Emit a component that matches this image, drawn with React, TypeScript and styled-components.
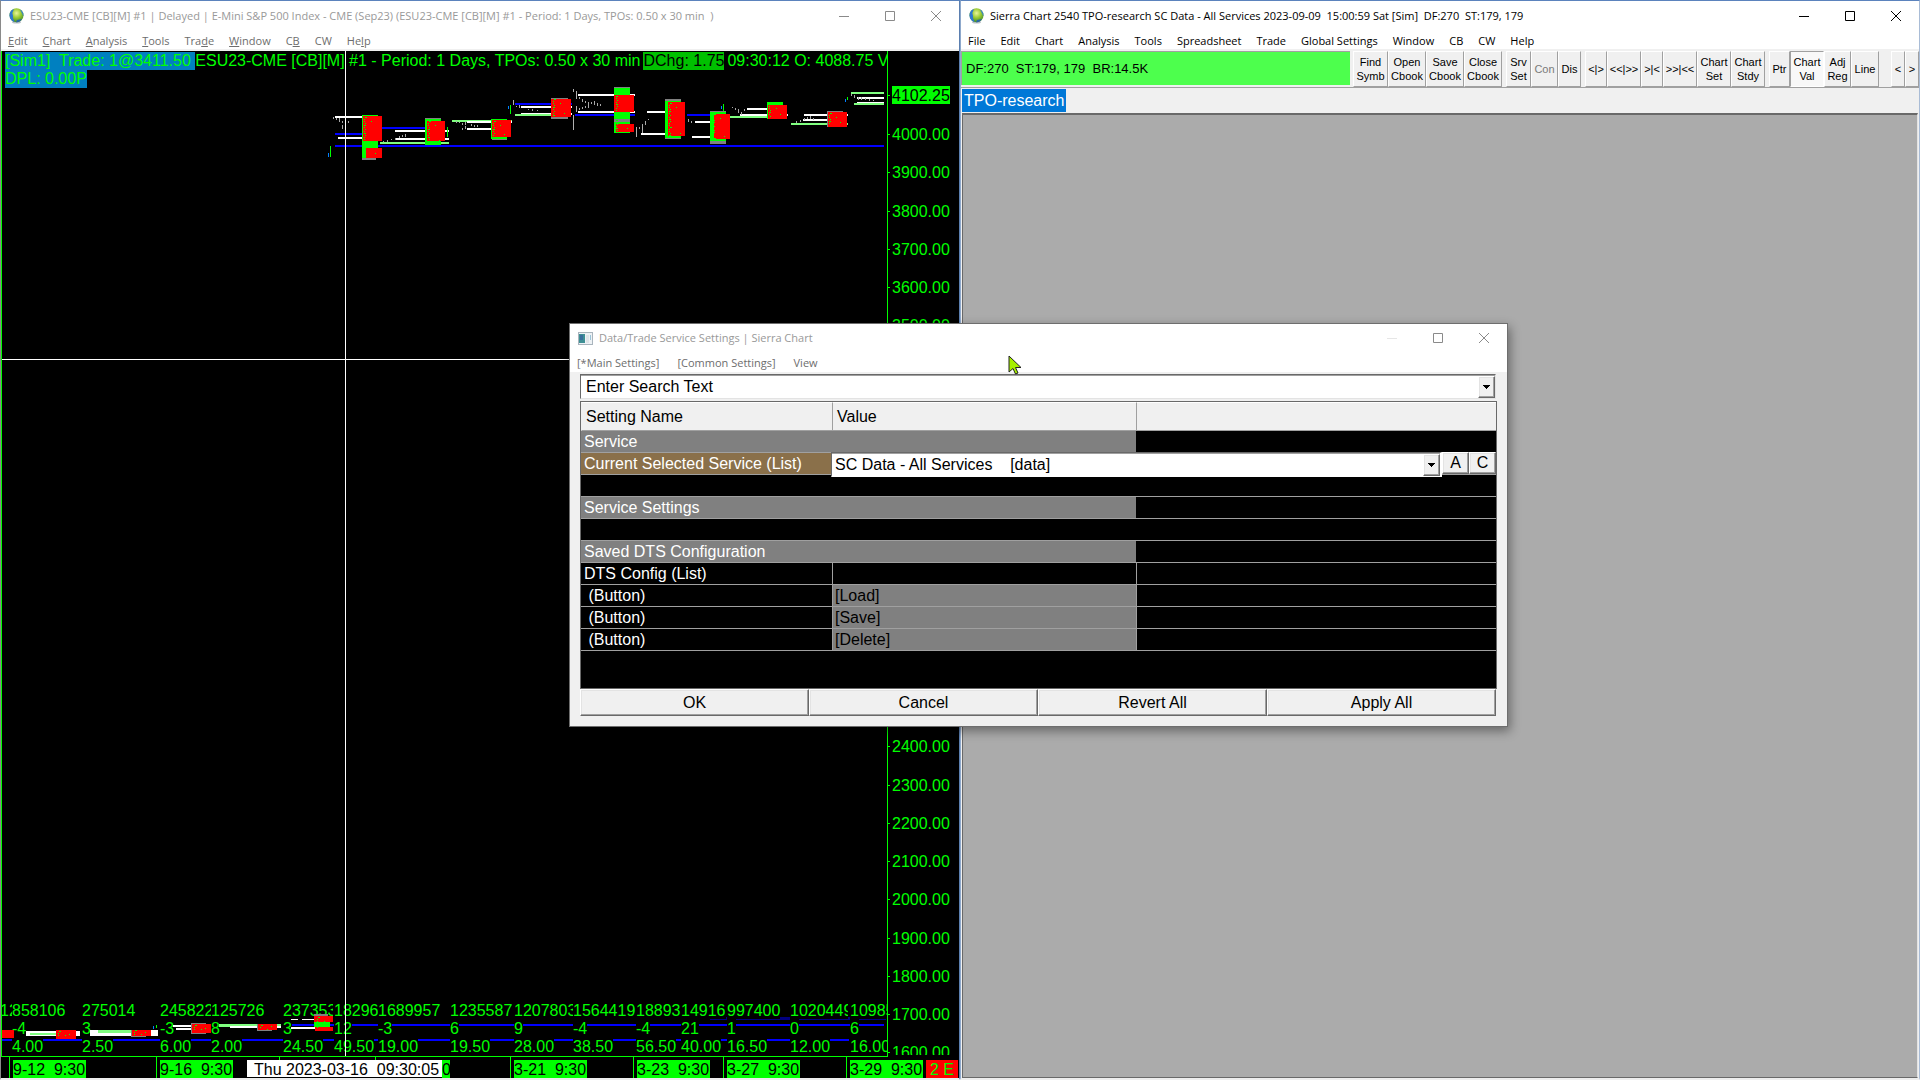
import React from "react";
import styled, { createGlobalStyle, css } from "styled-components";

const UI = '"Open Sans", "Noto Sans", sans-serif';
const ARIAL = '"Liberation Sans", Arial, sans-serif';
const GREEN = "#00ff00";

const Global = createGlobalStyle`
  * { box-sizing: border-box; }
  html, body, #root { height: 100%; margin: 0; }
  body { background: #eeeeee; overflow: hidden; font-family: ${ARIAL}; }
  button, input, select { font: inherit; color: inherit; margin: 0; }
`;

/* ---------- window frame ---------- */

const Desktop = styled.main`
  position: relative;
  display: grid;
  grid-template-columns: 1fr 1fr;
  height: 100vh;
`;

const Pane = styled.section<{ $edge: string; $right: string }>`
  display: flex;
  flex-direction: column;
  min-width: 0;
  min-height: 0;
  border: 1px solid #5b83bd;
  border-left-color: ${(p) => p.$edge};
  border-right-color: ${(p) => p.$right};
  border-bottom: 2px solid #eeeeee;
  background: #f0f0f0;
`;

const TitleBar = styled.header<{ $ink: string; $height?: number }>`
  display: flex;
  align-items: center;
  gap: 6px;
  flex: 0 0 ${(p) => p.$height ?? 30}px;
  padding-left: 8px;
  background: #ffffff;
  color: ${(p) => p.$ink};
  font: 11px/16px ${UI};
  white-space: pre;
`;

const TitleText = styled.h1`
  flex: 1;
  min-width: 0;
  margin: 0;
  overflow: hidden;
  font: inherit;
`;

const Controls = styled.div`
  display: flex;
  align-self: stretch;
`;

const ControlButton = styled.button`
  display: grid;
  place-items: center;
  width: 46px;
  padding: 0;
  border: 0;
  background: none;
`;

const Menu = styled.nav<{ $ink: string; $gap?: number }>`
  display: flex;
  align-items: center;
  gap: ${(p) => p.$gap ?? 15}px;
  flex: 0 0 18px;
  padding: 2px 7px 0;
  background: #ffffff;
  color: ${(p) => p.$ink};
  font: 11px/16px ${UI};
`;

const MenuItem = styled.button`
  padding: 0;
  border: 0;
  background: none;
  white-space: pre;
`;

const MenuEdge = styled.div`
  flex: 0 0 2px;
  background: #f0f0f0;
`;

function WindowControls({ ink, faintMin }: { ink: string; faintMin?: boolean }) {
  return (
    <Controls>
      <ControlButton aria-label="Minimize">
        <svg width="10" height="10" stroke={faintMin ? "#e6e6e6" : ink} fill="none"><path d="M0 5.5H10" /></svg>
      </ControlButton>
      <ControlButton aria-label="Maximize">
        <svg width="10" height="10" stroke={ink} fill="none"><path d="M.5 .5H9.5V9.5H.5Z" /></svg>
      </ControlButton>
      <ControlButton aria-label="Close">
        <svg width="10" height="10" stroke={ink} fill="none"><path d="M0 0L10 10M10 0L0 10" /></svg>
      </ControlButton>
    </Controls>
  );
}

function GlobeIcon({ id }: { id: string }) {
  return (
    <svg width="15" height="16" viewBox="0 0 15 16" aria-hidden="true">
      <defs>
        <radialGradient id={id} cx="0.5" cy="0.35" r="0.65">
          <stop offset="0" stopColor="#e9f59a" />
          <stop offset="0.5" stopColor="#9ccb34" />
          <stop offset="1" stopColor="#3d8a2c" />
        </radialGradient>
      </defs>
      <ellipse cx="7.5" cy="14" rx="4.5" ry="1.6" fill="#b9bfc6" />
      <circle cx="7.5" cy="7.3" r="7" fill={`url(#${id})`} />
      <path d="M4.5 1C1.500 2.300 .5 5 .5 7.500C.6 10.500 2.500 13 5.500 14C5 12 3.500 10.500 4 8.500C4.300 7 3 6 3.500 4.500C3.700 3.300 5 2.500 4.500 1Z" fill="#2f78d2" />
      <path d="M11 1.300C13.500 2.800 14.700 5 14.500 8C13.500 7.500 13.500 5.500 12.500 4.500C11.800 3.500 11.500 2.500 11 1.300Z" fill="#3b86c8" />
      <path d="M8 12C10 12 11.500 11 13 11C11.500 13.500 9.500 14.300 7 14.300Z" fill="#2a66a8" />
    </svg>
  );
}

/* ---------- chart window ---------- */

const ChartArea = styled.div`
  position: relative;
  flex: 1;
  min-height: 0;
  overflow: hidden;
  background: #000000;
`;

const ChartSvg = styled.svg`
  display: block;
  width: 100%;
  height: 100%;
  font: 16px ${ARIAL};
`;

const Legend = styled.div`
  position: absolute;
  top: 1px;
  left: 4px;
  right: 71px;
  overflow: hidden;
  color: ${GREEN};
  font: 16px/18px ${ARIAL};
  white-space: pre;
`;

const LegendLine = styled.div`
  display: flex;
`;

const LegendTag = styled.span<{ $bg?: string; $ink?: string; $after?: number }>`
  flex: none;
  background: ${(p) => p.$bg ?? "transparent"};
  color: ${(p) => p.$ink ?? GREEN};
  margin-right: ${(p) => p.$after ?? 0}px;
`;

const COLORS: Record<string, string> = {
  w: "#ffffff",
  b: "#0000ff",
  l: "#80ff80",
  g: GREEN,
  r: "#ff0000",
  y: "#808080",
  d: "#0080ff",
  s: "#b0b0b0",
  n: "#000080",
};

type Box = [string, number, number, number, number];

/* colour key, x1, y1, x2, y2 */
const LINES: Box[] = [
  ["b", 335, 145, 884, 147], ["w", 335, 116, 362, 118], ["b", 335, 133, 362, 135], ["w", 338, 137, 362, 139],
  ["g", 330, 146, 331, 157], ["d", 328, 153, 329, 157],
  ["b", 382, 127, 425, 129], ["w", 395, 130, 449, 132], ["w", 395, 138, 449, 140], ["l", 380, 142, 449, 144],
  ["l", 452, 120, 512, 122], ["w", 467, 121, 512, 123], ["w", 467, 128, 491, 130],
  ["b", 515, 103, 572, 105], ["w", 521, 106, 572, 108], ["w", 521, 113, 572, 115], ["l", 515, 114, 551, 116],
  ["g", 510, 105, 511, 114], ["d", 508, 106, 509, 109], ["s", 513, 100, 514, 105],
  ["s", 573, 89, 574, 92], ["s", 576, 91, 577, 99], ["s", 576, 106, 577, 112], ["s", 573, 115, 574, 130],
  ["w", 578, 94, 635, 96], ["w", 578, 111, 635, 113], ["b", 575, 114, 635, 116],
  ["w", 647, 111, 665, 113], ["w", 641, 133, 665, 135], ["s", 636, 127, 637, 137], ["s", 642, 125, 643, 133],
  ["b", 687, 114, 710, 116], ["w", 695, 121, 710, 123], ["w", 692, 136, 710, 138],
  ["g", 723, 104, 724, 112], ["d", 721, 106, 722, 109],
  ["w", 747, 108, 787, 110], ["w", 740, 114, 788, 116], ["l", 730, 116, 767, 118],
  ["w", 804, 114, 848, 116], ["w", 803, 119, 827, 121], ["l", 791, 123, 848, 125],
  ["l", 851, 92, 884, 94], ["w", 857, 97, 884, 99], ["w", 857, 102, 884, 104], ["l", 854, 103, 884, 105],
  ["g", 847, 97, 848, 100], ["d", 845, 99, 846, 102],
  ["w", 26, 1031, 80, 1036], ["l", 30, 1033, 60, 1035], ["w", 90, 1030, 158, 1036], ["l", 98, 1030, 131, 1033],
  ["d", 153, 1026, 154, 1029], ["g", 156, 1025, 157, 1028],
  ["w", 173, 1025, 191, 1027], ["w", 176, 1028, 191, 1030],
  ["l", 219, 1024, 281, 1027], ["w", 230, 1026, 281, 1028],
  ["w", 291, 1019, 298, 1020], ["w", 302, 1019, 333, 1020], ["w", 291, 1027, 333, 1029],
];

const BLOCKS: Box[] = [
  ["g", 362, 115, 378, 158], ["r", 363, 116, 382, 141], ["r", 366, 148, 382, 158], ["y", 362, 158, 376, 160],
  ["y", 425, 118, 441, 120], ["g", 425, 119, 441, 145], ["r", 427, 121, 445, 141], ["g", 447, 127, 448, 137],
  ["y", 492, 138, 507, 140], ["g", 491, 119, 507, 139], ["r", 492, 120, 511, 137],
  ["y", 551, 98, 568, 119], ["r", 551, 99, 571, 117],
  ["y", 614, 87, 630, 133], ["g", 614, 88, 630, 119], ["g", 614, 122, 630, 133], ["r", 614, 95, 634, 112], ["r", 616, 124, 634, 132],
  ["y", 665, 99, 681, 139], ["g", 665, 101, 681, 138], ["r", 668, 102, 685, 136],
  ["y", 710, 111, 726, 144], ["g", 710, 112, 726, 141], ["r", 714, 114, 730, 139],
  ["g", 767, 102, 783, 119], ["r", 768, 105, 787, 119],
  ["y", 827, 111, 843, 127], ["r", 828, 112, 847, 127],
  ["r", 2, 1030, 14, 1038], ["r", 56, 1030, 76, 1039],
  ["y", 131, 1030, 146, 1037], ["r", 132, 1030, 151, 1036],
  ["y", 191, 1023, 206, 1034], ["r", 192, 1024, 211, 1033],
  ["y", 257, 1024, 272, 1031], ["r", 258, 1024, 277, 1030],
  ["y", 314, 1014, 328, 1016], ["r", 314, 1016, 333, 1022], ["g", 314, 1022, 330, 1027], ["r", 315, 1027, 333, 1031],
];

/* green letter prints along the left edge of each profile: x, top, bottom */
const SPECKS: [number, number, number][] = [
  [364, 117, 157], [428, 121, 144], [493, 121, 138], [553, 99, 117], [616, 88, 132], [669, 103, 137],
  [713, 114, 140], [769, 104, 118], [829, 113, 126], [58, 1031, 1038], [134, 1030, 1036], [194, 1025, 1032],
  [260, 1025, 1030], [317, 1017, 1030],
];

/* short grey volume prints: x, y, height */
const PRINTS: [number, number, number][] = [
  [333, 117, 2], [336, 118, 2], [339, 118, 4], [342, 121, 2], [342, 125, 4], [348, 121, 2],
  [383, 141, 1], [387, 140, 2], [391, 139, 1], [395, 138, 2], [399, 136, 2], [402, 135, 2], [405, 134, 3],
  [456, 121, 2], [459, 122, 1], [462, 123, 2], [462, 128, 2], [465, 126, 3], [465, 122, 3], [471, 124, 2], [474, 125, 2], [477, 125, 2],
  [516, 106, 1], [519, 105, 3], [528, 109, 1], [532, 109, 2], [537, 110, 1],
  [579, 97, 2], [582, 99, 3], [585, 101, 2], [588, 102, 3], [591, 102, 2], [594, 101, 4], [597, 103, 3], [600, 104, 2],
  [579, 108, 2], [582, 107, 2], [585, 106, 2], [588, 105, 3],
  [639, 127, 2], [642, 124, 3], [645, 121, 4], [648, 119, 1], [688, 119, 3], [691, 121, 2],
  [732, 107, 1], [735, 108, 2], [738, 109, 4], [741, 112, 3], [744, 109, 2],
  [796, 121, 2], [800, 120, 2], [804, 118, 2], [807, 117, 2], [810, 116, 3], [813, 118, 2],
  [851, 94, 2], [854, 95, 3], [858, 97, 3], [861, 97, 3], [865, 98, 2], [869, 99, 2], [873, 100, 1],
];

/* x, cell width, volume, delta, range */
const STATS: [number, number, string, string, string][] = [
  [12, 70, "858106", "-4", "4.00"],
  [82, 78, "275014", "3", "2.50"],
  [160, 51, "245822", "-3", "6.00"],
  [211, 72, "125726", "8", "2.00"],
  [283, 50, "237353", "3", "24.50"],
  [334, 44, "18296", "12", "49.50"],
  [378, 72, "1689957", "-3", "19.00"],
  [450, 64, "1235587", "6", "19.50"],
  [514, 59, "1207803", "9", "28.00"],
  [573, 63, "1564419", "-4", "38.50"],
  [636, 45, "18893", "-4", "56.50"],
  [681, 46, "14916", "21", "40.00"],
  [727, 63, "997400", "1", "16.50"],
  [790, 58, "1020449", "0", "12.00"],
  [850, 37, "10985", "6", "16.00"],
];

const DATES: [number, string][] = [
  [13, "9-12  9:30"], [160, "9-16  9:30"], [514, "3-21  9:30"],
  [637, "3-23  9:30"], [727, "3-27  9:30"], [850, "3-29  9:30"],
];

const PRICES = Array.from({ length: 25 }, (_, i) => 4000 - i * 100);

const textWidth = (t: string) =>
  [...t].reduce((w, c) => w + (c === "." ? 4.45 : c === "-" ? 5.33 : 8.9), 0);

const Rect = ({ b }: { b: Box }) => (
  <rect x={b[1]} y={b[2]} width={b[3] - b[1]} height={b[4] - b[2]} fill={COLORS[b[0]]} />
);

function StatCell({ x, y, w, text }: { x: number; y: number; w: number; text: string }) {
  return (
    <svg x={x} y={y} width={w} height={18} overflow="hidden">
      <rect width={textWidth(text)} height="18" fill="#000" />
      <text x="0" y="15" fill={GREEN}>{text}</text>
    </svg>
  );
}

function Chart() {
  return (
    <ChartSvg viewBox="1 51 958 1027" preserveAspectRatio="xMinYMin meet" shapeRendering="crispEdges" aria-label="TPO profile chart">
      <rect x="2" y="1039" width="847" height="2" fill="#0000ff" />
      <rect x="291" y="1024" width="593" height="2" fill="#0000ff" />
      <rect x="710" y="1017" width="176" height="3" fill="#000080" />
      <StatCell x={0} y={1001} w={12} text="12" />
      {STATS.map(([x, w, vol, delta, range]) => (
        <g key={x}>
          <StatCell x={x} y={1001} w={w} text={vol} />
          <StatCell x={x} y={1019} w={w} text={delta} />
          <StatCell x={x} y={1037} w={w} text={range} />
        </g>
      ))}
      {LINES.map((b, i) => <Rect key={i} b={b} />)}
      {BLOCKS.map((b, i) => <Rect key={i} b={b} />)}
      {SPECKS.map(([x, top, bottom]) => (
        <g key={x} fill={GREEN}>
          {Array.from({ length: Math.floor((bottom - top) / 2) }, (_, i) => (
            <rect key={i} x={x + ((i * 7) % 3 === 0 ? 1 : 0)} y={top + i * 2} width={(i * 5) % 4 === 0 ? 2 : 1} height="1" />
          ))}
          <rect x={x + 7} y={top + 4} width="1" height="1" />
          <rect x={x + 11} y={bottom - 4} width="1" height="1" />
        </g>
      ))}
      {PRINTS.map(([x, y, h], i) => <rect key={i} x={x} y={y} width="1" height={h} fill="#a8a8a8" />)}

      <rect x="2" y="359" width="885" height="1" fill="#fff" />
      <rect x="345" y="51" width="1" height="1005" fill="#fff" />

      <rect x="1" y="51" width="1" height="1006" fill={GREEN} />
      <rect x="887" y="51" width="1" height="1006" fill={GREEN} />
      <rect x="1" y="1056" width="887" height="1" fill={GREEN} />

      <svg x="888" y="51" width="70" height="1004" viewBox="888 51 70 1004" overflow="hidden">
        {PRICES.map((p, i) => {
          const y = Math.round(134 + i * 38.27);
          return (
            <g key={p} fill={GREEN}>
              <rect x="888" y={y} width="2" height="1" />
              <text x="892" y={y + 6}>{p}.00</text>
            </g>
          );
        })}
        <rect x="888" y="95" width="2" height="1" fill={GREEN} />
        <rect x="892" y="86" width="58" height="18" fill={GREEN} />
        <text x="892" y="101" fill="#000">4102.25</text>
      </svg>

      {[9, 156, 510, 633, 723, 846].map((x) => <rect key={x} x={x} y="1056" width="1" height="22" fill={GREEN} />)}
      {[279, 375].map((x) => <rect key={x} x={x} y="1056" width="1" height="4" fill={GREEN} />)}
      {DATES.map(([x, label]) => (
        <g key={x}>
          <rect x={x} y="1060" width="73" height="18" fill={GREEN} />
          <text x={x} y="1075" style={{ whiteSpace: "pre" }}>{label}</text>
        </g>
      ))}
      <rect x="442" y="1060" width="8" height="18" fill={GREEN} />
      <text x="442" y="1075">0</text>
      <rect x="247" y="1060" width="195" height="17" fill="#fff" />
      <text x="254" y="1075" style={{ whiteSpace: "pre" }}>Thu 2023-03-16  09:30:05</text>
      <rect x="926" y="1060" width="32" height="18" fill="#ff0000" />
      <text x="930" y="1075" fill={GREEN}>2 E</text>
    </ChartSvg>
  );
}

/* label pieces: text before the access key, the key, text after it */
const CHART_MENU: [string, string, string][] = [
  ["", "E", "dit"], ["", "C", "hart"], ["", "A", "nalysis"], ["", "T", "ools"], ["Tra", "d", "e"],
  ["", "W", "indow"], ["C", "B", ""], ["CW", "", ""], ["He", "l", "p"],
];

/* ---------- main window ---------- */

const Toolbar = styled.div`
  display: flex;
  flex: 0 0 36px;
  font: 11px/14px ${ARIAL};
  color: #000000;
`;

const Status = styled.output`
  flex: 1;
  display: flex;
  align-items: center;
  min-width: 0;
  margin: 0 3px 2px 0;
  padding-left: 4px;
  border-top: 1px solid #a0a0a0;
  border-left: 1px solid #a0a0a0;
  background: #4dff4d;
  font-size: 13px;
  white-space: pre;
`;

const ToolButton = styled.button<{ $w: number; $before?: number; $pressed?: boolean; $dim?: boolean }>`
  flex: 0 0 ${(p) => p.$w}px;
  margin-left: ${(p) => p.$before ?? 0}px;
  padding: 0;
  border: 1px solid;
  border-color: #ffffff #a0a0a0 #a0a0a0 #ffffff;
  background: #f0f0f0;
  text-align: center;
  white-space: pre;
  ${(p) => p.$dim && css`color: #7a7a7a;`}
  ${(p) => p.$pressed && css`
    border-color: #a0a0a0 #ffffff #ffffff #a0a0a0;
    background: #f8f8f8;
  `}
`;

const TOOLS: { t: string; w: number; gap?: number; pressed?: boolean; dim?: boolean }[] = [
  { t: "Find\nSymb", w: 35 }, { t: "Open\nCbook", w: 38 }, { t: "Save\nCbook", w: 38 }, { t: "Close\nCbook", w: 38 },
  { t: "Srv\nSet", w: 25, gap: 4 }, { t: "Con", w: 27, dim: true }, { t: "Dis", w: 23 },
  { t: "<|>", w: 22, gap: 4 }, { t: "<<|>>", w: 34 }, { t: ">|<", w: 22 }, { t: ">>|<<", w: 34 },
  { t: "Chart\nSet", w: 34 }, { t: "Chart\nStdy", w: 34 },
  { t: "Ptr", w: 21, gap: 4 }, { t: "Chart\nVal", w: 34, pressed: true }, { t: "Adj\nReg", w: 27 }, { t: "Line", w: 28 },
  { t: "<", w: 14, gap: 12 }, { t: ">", w: 14 },
];

const MAIN_MENU = ["File", "Edit", "Chart", "Analysis", "Tools", "Spreadsheet", "Trade", "Global Settings", "Window", "CB", "CW", "Help"];

const TabStrip = styled.div`
  display: flex;
  flex: 0 0 26px;
  padding: 1px 0 1px 1px;
  border-top: 1px solid #a0a0a0;
`;

const Tab = styled.button`
  padding: 0 2px;
  border: 0;
  background: #0078d7;
  color: #ffffff;
  font: 16px/22px ${ARIAL};
`;

const Workspace = styled.div`
  flex: 1;
  margin: 0 1px;
  border: 1px solid #696969;
  border-top-width: 2px;
  border-right-color: #e3e3e3;
  background: #ababab;
`;

/* ---------- settings dialog ---------- */

const Dialog = styled.section`
  position: absolute;
  left: 569px;
  top: 323px;
  width: 939px;
  display: flex;
  flex-direction: column;
  border: 1px solid #6e6e6e;
  background: #f0f0f0;
  box-shadow: 2px 4px 10px rgba(0, 0, 0, 0.4);
  color: #000000;
  font: 16px/18px ${ARIAL};
`;

const DialogBody = styled.div`
  display: flex;
  flex-direction: column;
  gap: 2px;
  padding: 2px 10px 10px;
`;

const Combo = styled.div`
  display: flex;
  height: 25px;
  border: 1px solid;
  border-color: #696969 #e3e3e3 #e3e3e3 #696969;
  box-shadow: inset 0 1px #a0a0a0;
  background: #ffffff;
`;

const SearchBox = styled(Combo)`
  margin-right: 1px;
`;

const raised = css`
  border: 1px solid;
  border-color: #ffffff #696969 #696969 #ffffff;
  background: #f0f0f0;
  box-shadow: inset -1px -1px #a0a0a0, inset 1px 1px #e3e3e3;
`;

const SearchInput = styled.input`
  flex: 1;
  min-width: 0;
  padding: 0 5px;
  border: 0;
  background: transparent;
  outline: 0;
  &::placeholder { color: #000000; opacity: 1; }
`;

const DropButton = styled.button`
  ${raised}
  display: grid;
  place-items: center;
  width: 17px;
  margin: 1px 0 0;
  padding: 0;
`;

const ServiceSelect = styled.select`
  flex: 1;
  min-width: 0;
  padding: 0 3px;
  border: 0;
  outline: 0;
  appearance: none;
  background: transparent;
`;

const DropMark = styled.span`
  ${raised}
  display: grid;
  place-items: center;
  width: 17px;
  margin-top: 1px;
  pointer-events: none;
`;

const Arrow = () => <svg width="7" height="4" shapeRendering="crispEdges"><path d="M0 0H7V1H6V2H5V3H4V4H3V3H2V2H1V1H0Z" /></svg>;

const TableFrame = styled.div`
  min-height: 288px;
  border: 1px solid #696969;
  background: #000000;
`;

const Table = styled.table`
  width: 100%;
  border-collapse: separate;
  border-spacing: 0;
  table-layout: fixed;
`;

const Head = styled.th`
  height: 29px;
  padding: 0 0 0 4px;
  border-top: 1px solid #ffffff;
  border-left: 1px solid #a0a0a0;
  border-bottom: 1px solid #a0a0a0;
  background: #f0f0f0;
  text-align: left;
  font-weight: 400;
  &:first-child { border-left-color: #f0f0f0; }
`;

const Cell = styled.td<{ $bg?: string; $ink?: string; $rule?: boolean }>`
  position: relative;
  height: 22px;
  padding: 0 0 0 ${(p) => (p.$rule ? 2 : 3)}px;
  border-bottom: 1px solid #a0a0a0;
  border-left: ${(p) => (p.$rule ? "1px solid #a0a0a0" : "0")};
  background: ${(p) => p.$bg ?? "#000000"};
  color: ${(p) => p.$ink ?? "#ffffff"};
  white-space: pre;
`;

const RowLabel = styled.label`
  display: block;
  text-align: left;
  font-weight: 400;
`;

const LinkCell = styled.button`
  padding: 0;
  border: 0;
  background: none;
`;

/* the in-place editor floats over its row and the one below it */
const Editor = styled.div`
  position: absolute;
  z-index: 1;
  left: -1px;
  right: 0;
  top: -1px;
  display: flex;
  align-items: flex-start;
  color: #000000;
`;

const EditorCombo = styled(Combo)`
  flex: 1;
  border-bottom-color: #ffffff;
  border-right-width: 2px;
  border-right-color: #ffffff;
`;

const EditorButton = styled.button`
  ${raised}
  width: 27px;
  height: 22px;
  padding: 0;
  line-height: 18px;
`;

const Footer = styled.div`
  display: grid;
  grid-template-columns: repeat(4, 1fr);
  margin: -2px 1px 0 0;
`;

const FooterButton = styled.button`
  ${raised}
  height: 27px;
  padding: 0;
`;

const Cursor = styled.svg`
  position: absolute;
  left: 1008px;
  top: 355px;
`;

const GRAY = "#808080";

function SettingsDialog() {
  return (
    <Dialog role="dialog" aria-label="Data/Trade Service Settings">
      <TitleBar $ink="#999999" $height={28}>
        <svg width="15" height="13" shapeRendering="crispEdges" aria-hidden="true">
          <rect width="15" height="13" fill="#a9b4bd" />
          <rect x="1" y="1" width="13" height="11" fill="#eef2f5" />
          <rect x="1" y="2" width="6" height="9" fill="#3f8f94" />
          <rect x="2" y="3" width="3" height="5" fill="#3a6f9c" />
          <rect x="8" y="3" width="3" height="8" fill="#dfe4e8" />
          <rect x="12" y="3" width="1" height="5" fill="#9cc4d8" />
        </svg>
        <TitleText as="h2">Data/Trade Service Settings | Sierra Chart</TitleText>
        <WindowControls ink="#8a8a8a" faintMin />
      </TitleBar>
      <Menu $ink="#6d6d6d" $gap={18} as={DialogMenu}>
        <MenuItem>[*Main Settings]</MenuItem>
        <MenuItem>[Common Settings]</MenuItem>
        <MenuItem>View</MenuItem>
      </Menu>
      <DialogBody>
        <SearchBox>
          <SearchInput aria-label="Search settings" placeholder="Enter Search Text" />
          <DropButton aria-label="Search history"><Arrow /></DropButton>
        </SearchBox>
        <TableFrame>
          <Table>
            <colgroup><col width="251" /><col width="304" /><col /></colgroup>
            <thead>
              <tr><Head>Setting Name</Head><Head>Value</Head><Head /></tr>
            </thead>
            <tbody>
              <tr><Cell $bg={GRAY} colSpan={2}>Service</Cell><Cell /></tr>
              <tr>
                <Cell $bg="#8a704a"><RowLabel htmlFor="service">Current Selected Service (List)</RowLabel></Cell>
                <Cell colSpan={2}>
                  <Editor>
                    <EditorCombo>
                      <ServiceSelect id="service" defaultValue="data">
                        <option value="data">{"SC Data - All Services\u00a0\u00a0\u00a0 [data]"}</option>
                      </ServiceSelect>
                      <DropMark><Arrow /></DropMark>
                    </EditorCombo>
                    <EditorButton>A</EditorButton>
                    <EditorButton>C</EditorButton>
                  </Editor>
                </Cell>
              </tr>
              <tr><Cell colSpan={3} /></tr>
              <tr><Cell $bg={GRAY} colSpan={2}>Service Settings</Cell><Cell /></tr>
              <tr><Cell colSpan={3} /></tr>
              <tr><Cell $bg={GRAY} colSpan={2}>Saved DTS Configuration</Cell><Cell /></tr>
              <tr><Cell>DTS Config (List)</Cell><Cell $rule /><Cell $rule /></tr>
              {["[Load]", "[Save]", "[Delete]"].map((action) => (
                <tr key={action}>
                  <Cell>{" (Button)"}</Cell>
                  <Cell $rule $bg={GRAY} $ink="#000000"><LinkCell>{action}</LinkCell></Cell>
                  <Cell $rule />
                </tr>
              ))}
            </tbody>
          </Table>
        </TableFrame>
        <Footer>
          {["OK", "Cancel", "Revert All", "Apply All"].map((b) => <FooterButton key={b}>{b}</FooterButton>)}
        </Footer>
      </DialogBody>
    </Dialog>
  );
}

const DialogMenu = styled.nav`
  && {
    flex-basis: 20px;
    padding-bottom: 1px;
  }
`;

export default function App() {
  return (
    <Desktop>
      <Global />
      <Pane $edge="#8a8a8a" $right="#5b7fb0">
        <TitleBar $ink="#999999">
          <GlobeIcon id="globe-chart" />
          <TitleText>{"ESU23-CME [CB][M] #1 | Delayed | E-Mini S&P 500 Index - CME (Sep23) (ESU23-CME [CB][M] #1 - Period: 1 Days, TPOs: 0.50 x 30 min  )"}</TitleText>
          <WindowControls ink="#8a8a8a" />
        </TitleBar>
        <Menu $ink="#6d6d6d">
          {CHART_MENU.map(([a, key, z]) => <MenuItem key={a + key + z}>{a}{key && <u>{key}</u>}{z}</MenuItem>)}
        </Menu>
        <MenuEdge />
        <ChartArea>
          <Chart />
          <Legend>
            <LegendLine>
              <LegendTag $bg="#0080c0">{"[Sim1]  Trade: 1@3411.50 "}</LegendTag>
              <LegendTag $after={3}>ESU23-CME [CB][M] #1 - Period: 1 Days, TPOs: 0.50 x 30 min</LegendTag>
              <LegendTag $bg="#00c000" $ink="#000000" $after={3}>DChg: 1.75</LegendTag>
              <LegendTag>09:30:12 O: 4088.75 V</LegendTag>
            </LegendLine>
            <LegendLine><LegendTag $bg="#0080c0">DPL: 0.00P</LegendTag></LegendLine>
          </Legend>
        </ChartArea>
      </Pane>

      <Pane $edge="#8fa9cc" $right="#a9bcd6">
        <TitleBar $ink="#000000">
          <GlobeIcon id="globe-main" />
          <TitleText>{"Sierra Chart 2540 TPO-research SC Data - All Services 2023-09-09  15:00:59 Sat [Sim]  DF:270  ST:179, 179"}</TitleText>
          <WindowControls ink="#000000" />
        </TitleBar>
        <Menu $ink="#000000">
          {MAIN_MENU.map((m) => <MenuItem key={m}>{m}</MenuItem>)}
        </Menu>
        <MenuEdge />
        <Toolbar>
          <Status>{"DF:270  ST:179, 179  BR:14.5K"}</Status>
          {TOOLS.map((b, i) => (
            <ToolButton key={i} $w={b.w} $before={b.gap} $pressed={b.pressed} $dim={b.dim} disabled={b.dim}>{b.t}</ToolButton>
          ))}
        </Toolbar>
        <TabStrip><Tab>TPO-research</Tab></TabStrip>
        <Workspace />
      </Pane>

      <SettingsDialog />
      <Cursor width="14" height="20" viewBox="0 0 14 20" aria-hidden="true">
        <path d="M1 1V17L5 13.500L7.500 19L10 18L7.500 12.500H13Z" fill="#a6f000" stroke="#222" />
      </Cursor>
    </Desktop>
  );
}
